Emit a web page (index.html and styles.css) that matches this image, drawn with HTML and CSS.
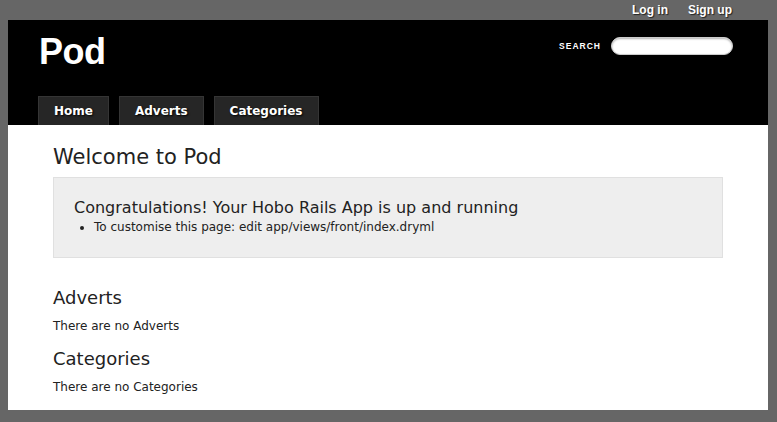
FILE: index.html
```html
<!DOCTYPE html>
<html>
<head>
<meta charset="utf-8">
<title>Pod</title>
<link rel="stylesheet" href="styles.css">
</head>
<body>
<div class="page">
  <div class="account-nav">
    <a href="#">Log in</a>
    <a href="#">Sign up</a>
  </div>
  <div class="header">
    <div class="header-top">
      <h1 class="app-name">Pod</h1>
      <form class="search">
        <span class="search-label">SEARCH</span>
        <input class="search-field" type="text">
      </form>
    </div>
    <ul class="main-nav">
      <li><a href="#">Home</a></li>
      <li><a href="#">Adverts</a></li>
      <li><a href="#">Categories</a></li>
    </ul>
  </div>
  <div class="content">
    <h2 class="welcome">Welcome to Pod</h2>
    <div class="panel">
      <h3>Congratulations! Your Hobo Rails App is up and running</h3>
      <ul>
        <li>To customise this page: edit app/views/front/index.dryml</li>
      </ul>
    </div>
    <h3 class="section-title">Adverts</h3>
    <p class="empty">There are no Adverts</p>
    <h3 class="section-title">Categories</h3>
    <p class="empty">There are no Categories</p>
  </div>
</div>
</body>
</html>
```

FILE: styles.css
```css
html, body {
  margin: 0;
  padding: 0;
  background: #666666;
  height: 100%;
}
body {
  font-family: "DejaVu Sans", "Liberation Sans", sans-serif;
  color: #222;
}
.page {
  width: 760px;
  margin-left: 8px;
}
.account-nav {
  height: 19px;
  padding-bottom: 1px;
  display: flex;
  justify-content: flex-end;
  align-items: center;
  gap: 20px;
  padding-right: 36px;
  font-family: "Liberation Sans", Arial, sans-serif;
  font-weight: bold;
  font-size: 12px;
}
.account-nav a {
  color: #fff;
  text-decoration: none;
  text-shadow: 1px 1px 1px #222;
}
.header {
  background: #000;
  height: 105px;
  display: flex;
  flex-direction: column;
  justify-content: space-between;
}
.header-top {
  display: flex;
  justify-content: space-between;
  align-items: flex-start;
  padding: 11px 35px 0 31px;
}
.app-name {
  margin: 0;
  font-family: "Liberation Sans", Arial, sans-serif;
  font-weight: bold;
  font-size: 36px;
  line-height: 41px;
  color: #fff;
  letter-spacing: -0.5px;
}
.search {
  display: flex;
  align-items: center;
  gap: 10px;
  margin: 6px 0 0 0;
}
.search-label {
  font-family: "Liberation Sans", Arial, sans-serif;
  font-weight: bold;
  font-size: 8.5px;
  letter-spacing: 1px;
  color: #fff;
}
.search-field {
  width: 118px;
  height: 16px;
  border: 1px solid #ccc;
  border-radius: 9px;
  background: #fff;
  padding: 0 1px;
  margin: 0;
  box-shadow: inset 0 1px 2px rgba(0,0,0,0.3);
}
.main-nav {
  list-style: none;
  margin: 0;
  padding: 0 0 0 30px;
  display: flex;
  gap: 10px;
}
.main-nav li {
  display: block;
}
.main-nav a {
  display: block;
  height: 28px;
  line-height: 28px;
  padding: 0 15px;
  background: #262626;
  border: 1px solid #353535;
  border-bottom: none;
  color: #fff;
  text-decoration: none;
  font-family: "DejaVu Sans", "Liberation Sans", sans-serif;
  font-weight: bold;
  font-size: 12px;
  text-shadow: 1px 1px 2px #000;
}
.content {
  background: #fff;
  height: 285px;
  padding: 0 45px;
  box-sizing: border-box;
  overflow: hidden;
}
.welcome {
  margin: 0;
  padding-top: 19px;
  font-size: 21px;
  font-weight: normal;
  line-height: 26px;
}
.panel {
  margin-top: 7px;
  background: #eeeeee;
  border: 1px solid #e0e0e0;
  padding: 20px 20px 10px 20px;
  height: 81px;
  box-sizing: border-box;
}
.panel h3 {
  margin: 0;
  font-size: 16px;
  font-weight: normal;
  line-height: 20px;
}
.panel ul {
  margin: 1px 0 0 0;
  padding-left: 20px;
  font-size: 12px;
  line-height: 16px;
}
.section-title {
  margin: 28px 0 0 0;
  font-size: 18px;
  font-weight: normal;
  line-height: 24px;
}
.section-title + .empty + .section-title {
  margin-top: 13px;
}
.empty {
  margin: 8px 0 0 0;
  font-size: 12px;
  line-height: 16px;
}
```
